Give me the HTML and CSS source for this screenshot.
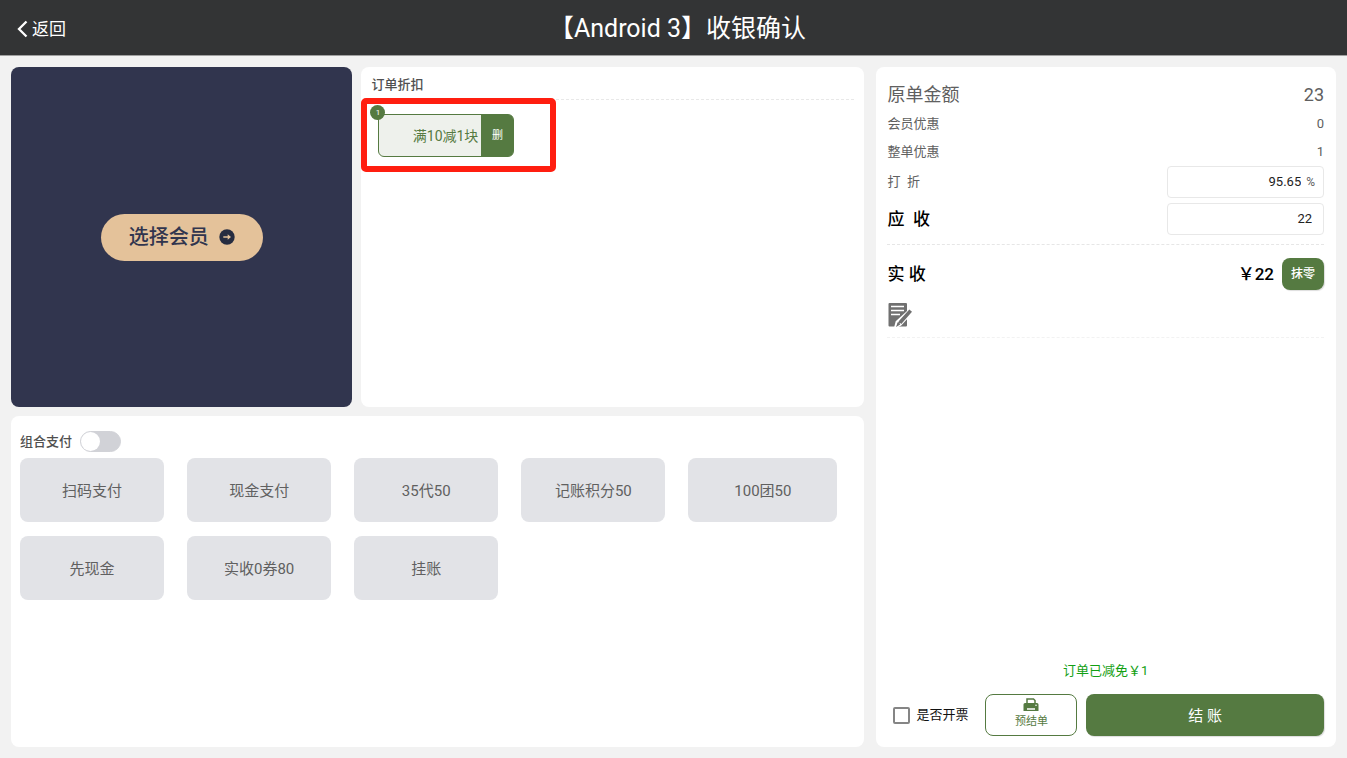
FILE: index.html
```html
<!DOCTYPE html>
<html lang="zh-CN">
<head>
    <meta charset="UTF-8">
    <meta name="viewport" content="width=device-width, initial-scale=1.0">
    <title>收银确认</title>
    <link rel="stylesheet" href="styles.css">
</head>
<body>
    <header class="header">
        <button class="back" type="button">
            <svg width="12" height="18" viewBox="0 0 12 18" fill="none" stroke="#fff" stroke-width="2.300"><path d="M10.500 1.500 3 9l7.500 7.500"/></svg>
            返回
        </button>
        <h1>【Android 3】收银确认</h1>
    </header>

    <main class="main">
        <div class="left">
            <div class="top-row">
                <section class="member">
                    <button class="member-btn" type="button">
                        选择会员
                        <svg width="16" height="16" viewBox="0 0 16 16"><circle cx="8" cy="8" r="7.700" fill="#262c40"/><path d="M4.300 7.300h4.400V5.300L12 8l-3.300 2.700v-2H4.300z" fill="#e4c29a"/></svg>
                    </button>
                </section>

                <section class="card discount">
                    <h2>订单折扣</h2>
                    <div class="coupons">
                        <div class="coupon">
                            <span class="coupon-count">1</span>
                            <span class="coupon-name">满10减1块</span>
                            <button class="coupon-del" type="button">删</button>
                        </div>
                        <div class="highlight"></div>
                    </div>
                </section>
            </div>

            <section class="card payment">
                <div class="combo">
                    <label for="combo">组合支付</label>
                    <input class="switch" type="checkbox" role="switch" id="combo">
                </div>
                <div class="pay-grid">
                    <button class="pay-btn" type="button">扫码支付</button>
                    <button class="pay-btn" type="button">现金支付</button>
                    <button class="pay-btn" type="button">35代50</button>
                    <button class="pay-btn" type="button">记账积分50</button>
                    <button class="pay-btn" type="button">100团50</button>
                    <button class="pay-btn" type="button">先现金</button>
                    <button class="pay-btn" type="button">实收0券80</button>
                    <button class="pay-btn" type="button">挂账</button>
                </div>
            </section>
        </div>

        <aside class="card summary">
            <div class="row row-total">
                <span>原单金额</span>
                <span>23</span>
            </div>
            <div class="row">
                <span>会员优惠</span>
                <span>0</span>
            </div>
            <div class="row">
                <span>整单优惠</span>
                <span>1</span>
            </div>
            <div class="row row-field">
                <label for="rate">打&nbsp; 折</label>
                <div class="field">
                    <input type="text" id="rate" value="95.65">
                    <span class="unit">%</span>
                </div>
            </div>
            <div class="row row-field">
                <label class="strong" for="due">应&nbsp; 收</label>
                <div class="field">
                    <input type="text" id="due" value="22">
                </div>
            </div>
            <div class="line"></div>
            <div class="row row-paid strong">
                <span>实 收</span>
                <div class="paid">
                    <span>￥22</span>
                    <button class="round-btn" type="button">抹零</button>
                </div>
            </div>
            <button class="note" type="button" aria-label="备注">
                <svg width="24" height="24" viewBox="0 0 24 24">
                    <path d="M1.500 0h16.500a1 1 0 0 1 1 1v21.500a1 1 0 0 1-1 1H1.500a1 1 0 0 1-1-1V1a1 1 0 0 1 1-1z" fill="#707070"/>
                    <path d="M3 3.500h13M3 7.500h13M3 11.500h9" stroke="#fff" stroke-width="1.700"/>
                    <path d="M22 7 24 9 12.500 21.500 7.500 24l1.300-5z" fill="#707070" stroke="#fff" stroke-width="2.500"/>
                    <path d="M21.300 6.500 24 8.800 13.300 21l-2.800-2.400zM9.700 19.200l2.600 2.200L8 24z" fill="#707070"/>
                </svg>
            </button>
            <div class="line line-light"></div>

            <div class="bottom">
                <p class="saved">订单已减免￥1</p>
                <div class="actions">
                    <label class="invoice"><input type="checkbox">是否开票</label>
                    <button class="pre-btn" type="button">
                        <svg width="16" height="14" viewBox="0 0 16 14">
                            <path d="M4 5.500V1h6.500L12 2.500v3" fill="none" stroke="#557a41" stroke-width="1.500"/>
                            <path d="M2 5h12a1.500 1.500 0 0 1 1.500 1.500V13H.500V6.500A1.500 1.500 0 0 1 2 5z" fill="#557a41"/>
                            <path d="M4 11h8" stroke="#fff" stroke-width="1.500"/>
                            <circle cx="13" cy="7.300" r=".8" fill="#fff"/>
                        </svg>
                        预结单
                    </button>
                    <button class="checkout" type="button">结 账</button>
                </div>
            </div>
        </aside>
    </main>
</body>
</html>
```
FILE: styles.css
```css
* {
    margin: 0;
    padding: 0;
    box-sizing: border-box;
}

body {
    display: flex;
    flex-direction: column;
    min-height: 100vh;
    background-color: #f2f2f2;
    color: #606060;
    font-family: Roboto, "Noto Sans CJK SC", sans-serif;
    font-size: 13px;
    line-height: 20px;
}

button,
input {
    font: inherit;
    color: inherit;
}

button {
    border: none;
    background: none;
    cursor: pointer;
}

svg {
    display: block;
    flex: none;
}

.header {
    display: grid;
    grid-template-columns: 1fr auto 1fr;
    align-items: center;
    height: 56px;
    padding: 2px 16px 0;
    background-color: #333435;
    border-bottom: 1px solid #a0a0a0;
    color: #fff;
}

.header h1 {
    padding-left: 8px;
    font-size: 25px;
    line-height: 36px;
    font-weight: 400;
}

.back {
    display: flex;
    align-items: center;
    justify-self: start;
    gap: 4px;
    font-size: 17px;
}

.main {
    flex: 1;
    display: grid;
    grid-template-columns: 13fr 7fr;
    gap: 12px;
    padding: 11px;
}

.card {
    background-color: #fff;
    border-radius: 8px;
}

.left {
    display: flex;
    flex-direction: column;
    gap: 9px;
}

.top-row {
    display: flex;
    gap: 9px;
}

/* member */
.member {
    display: flex;
    align-items: center;
    justify-content: center;
    width: 40%;
    aspect-ratio: 341 / 340;
    background-color: #31354e;
    border-radius: 8px;
}

.member-btn {
    display: flex;
    align-items: center;
    gap: 10px;
    height: 47px;
    padding: 0 28px;
    border-radius: 24px;
    background-color: #e4c29a;
    color: #31354e;
    font-size: 20px;
    font-weight: 500;
}

/* discount */
.discount {
    flex: 1;
    padding: 8px 10px;
}

.discount h2 {
    height: 25px;
    border-bottom: 1px dashed #e8e8e8;
    color: #505050;
    font-size: 13px;
    font-weight: 500;
}

.coupons {
    position: relative;
    padding: 14px 7px;
}

.coupon {
    position: relative;
    display: flex;
    align-items: center;
    width: 136px;
    height: 43px;
    border: 1px solid #557a41;
    border-radius: 6px;
    background-color: #eef1ec;
    color: #557a41;
}

.coupon-name {
    flex: 1;
    padding-right: 3px;
    text-align: right;
    font-size: 14px;
}

.coupon-del {
    align-self: stretch;
    width: 32px;
    border-radius: 0 4px 4px 0;
    background-color: #557a41;
    color: #fff;
    font-size: 11px;
}

.coupon-count {
    position: absolute;
    top: -10px;
    left: -9px;
    width: 15px;
    height: 15px;
    border-radius: 50%;
    background-color: #557a41;
    color: #fff;
    font-size: 8px;
    line-height: 15px;
    text-align: center;
}

.highlight {
    position: absolute;
    top: -2px;
    left: -10px;
    width: 195px;
    height: 74px;
    border: 6px solid #ff1e10;
    border-radius: 5px;
    pointer-events: none;
}

/* payment */
.payment {
    flex: 1;
    padding: 15px 27px 15px 9px;
}

.combo {
    display: flex;
    align-items: center;
    gap: 8px;
    margin-bottom: 6px;
    color: #505050;
    font-weight: 500;
}

.switch {
    appearance: none;
    display: flex;
    width: 41px;
    height: 21px;
    border: 1px solid #d1d2d7;
    border-radius: 11px;
    background-color: #d1d2d7;
    cursor: pointer;
}

.switch::before {
    content: '';
    width: 19px;
    height: 19px;
    border-radius: 50%;
    background-color: #fff;
}

.switch:checked {
    justify-content: flex-end;
    background-color: #557a41;
}

.pay-grid {
    display: grid;
    grid-template-columns: repeat(4, 29fr) 30fr;
    gap: 14px 23px;
}

.pay-btn {
    height: 64px;
    padding-top: 2px;
    border-radius: 8px;
    background-color: #e2e3e7;
    font-size: 15px;
}

/* summary */
.summary {
    display: flex;
    flex-direction: column;
    padding: 13px 12px 11px 11px;
}

.row {
    display: flex;
    align-items: center;
    justify-content: space-between;
    height: 28px;
}

.row-total {
    height: 30px;
    font-size: 18px;
}

.row-field {
    height: 32px;
    margin-bottom: 5px;
}

.strong {
    color: #000;
    font-size: 17px;
    font-weight: 500;
}

.field {
    display: flex;
    align-items: center;
    width: 157px;
    height: 32px;
    padding-right: 8px;
    border: 1px solid #e8e8e8;
    border-radius: 4px;
}

.field input {
    flex: 1;
    min-width: 0;
    padding-right: 3px;
    border: none;
    outline: none;
    background: none;
    color: #222;
    text-align: right;
}

.unit {
    margin-left: 2px;
    font-size: 12px;
}

.line {
    margin-top: 4px;
    border-top: 1px dashed #e6e6e6;
}

.line-light {
    margin-top: 10px;
    border-color: #f2f2f2;
}

.row-paid {
    height: 58px;
}

.paid {
    display: flex;
    align-items: center;
    gap: 8px;
}

.round-btn {
    width: 42px;
    height: 32px;
    border-radius: 8px;
    background-color: #557a41;
    box-shadow: 1px 1px 1px #ddd;
    color: #fff;
    font-size: 12px;
}

.note {
    align-self: flex-start;
    padding-left: 1px;
}

.bottom {
    margin-top: auto;
}

.saved {
    margin-bottom: 13px;
    color: #13a013;
    text-align: center;
}

.actions {
    display: flex;
    align-items: center;
    gap: 9px;
    height: 42px;
}

.invoice {
    display: flex;
    align-items: center;
    gap: 6px;
    margin-right: 8px;
    padding-left: 6px;
    color: #111;
    white-space: nowrap;
}

.invoice input {
    appearance: none;
    width: 17px;
    height: 17px;
    border: 2px solid #858585;
    border-radius: 2px;
}

.invoice input:checked {
    background-color: #557a41;
}

.pre-btn {
    display: flex;
    flex-direction: column;
    align-items: center;
    justify-content: center;
    width: 92px;
    height: 42px;
    border: 1px solid #557a41;
    border-radius: 8px;
    color: #557a41;
    font-size: 11px;
    line-height: 20px;
}

.checkout {
    flex: 1;
    height: 42px;
    padding-top: 2px;
    border-radius: 8px;
    background-color: #557a41;
    box-shadow: 1px 1px 1px #ddd;
    color: #fff;
    font-size: 15px;
}
```
